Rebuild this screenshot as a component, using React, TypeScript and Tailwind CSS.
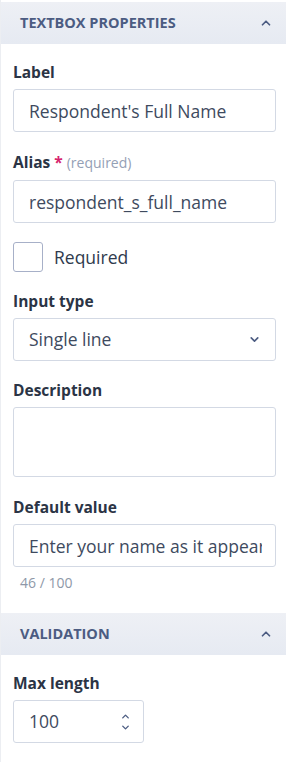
import { ChevronDown, ChevronUp } from "lucide-react";

const font = { fontFamily: '"Open Sans", "Noto Sans", sans-serif' };

const SectionHeader = ({ title }: { title: string }) => (
  <div className="flex h-[42px] items-center justify-between bg-gradient-to-b from-[#eef0f5] to-[#e6eaf2] pl-[19px] pr-[13px]">
    <span className="text-[14.5px] font-bold text-[#4c5c82]">{title}</span>
    <ChevronUp size={14} strokeWidth={3} className="text-[#4c5c82]" />
  </div>
);

const FieldLabel = ({ children }: { children: React.ReactNode }) => (
  <div className="text-[15.5px] font-bold leading-5 text-[#2b3445]">{children}</div>
);

const TextBox = ({ value }: { value: string }) => (
  <input
    readOnly
    value={value}
    style={font}
    className="mt-[7px] block h-[43px] w-full rounded-[3px] border border-[#d3d9e4] bg-white pl-[15px] pr-[13px] text-[17.5px] text-[#3e4a5e] outline-none"
  />
);

export default function App() {
  return (
    <div style={font} className="h-[762px] w-[286px] border-l border-[#eceef2] bg-white pt-[2px]">
      <SectionHeader title="TEXTBOX PROPERTIES" />

      <div className="pl-[12px] pr-[10px]">
        <div className="mt-[18px]">
          <FieldLabel>Label</FieldLabel>
          <TextBox value="Respondent's Full Name" />
        </div>

        <div className="mt-[20px]">
          <FieldLabel>
            Alias <span className="text-[#d6246e]">*</span>{" "}
            <span className="text-[14px] font-normal text-[#94a0b5]">(required)</span>
          </FieldLabel>
          <TextBox value="respondent_s_full_name" />
        </div>

        <label className="mt-[19px] flex items-center gap-[11px]">
          <span className="h-[30px] w-[30px] rounded-[3px] border border-[#a7b0c8] bg-white" />
          <span className="text-[17.5px] text-[#2f3a4d]">Required</span>
        </label>

        <div className="mt-[19px]">
          <FieldLabel>Input type</FieldLabel>
          <div className="mt-[7px] flex h-[43px] items-center justify-between rounded-[3px] border border-[#d3d9e4] bg-white pl-[15px] pr-[14px] text-[17.5px] text-[#3e4a5e]">
            <span>Single line</span>
            <ChevronDown size={13} strokeWidth={3} className="text-[#4c5c82]" />
          </div>
        </div>

        <div className="mt-[19px]">
          <FieldLabel>Description</FieldLabel>
          <div className="mt-[7px] h-[70px] rounded-[3px] border border-[#d3d9e4] bg-white" />
        </div>

        <div className="mt-[20px]">
          <FieldLabel>Default value</FieldLabel>
          <TextBox value="Enter your name as it appears on your ID" />
          <div className="mt-[5px] pl-[7px] text-[14px] text-[#8e98a8]">46 / 100</div>
        </div>
      </div>

      <div className="mt-[20px]">
        <SectionHeader title="VALIDATION" />
      </div>

      <div className="pl-[12px] pr-[10px]">
        <div className="mt-[18px]">
          <FieldLabel>Max length</FieldLabel>
          <div className="mt-[7px] flex h-[43px] w-[131px] items-center justify-between rounded-[3px] border border-[#d3d9e4] bg-white pl-[15px] pr-[12px] text-[17.5px] text-[#3e4a5e]">
            <span>100</span>
            <span className="flex flex-col items-center text-[#4c5c82]">
              <ChevronUp size={11} strokeWidth={3} />
              <ChevronDown size={11} strokeWidth={3} />
            </span>
          </div>
        </div>
      </div>
    </div>
  );
}
